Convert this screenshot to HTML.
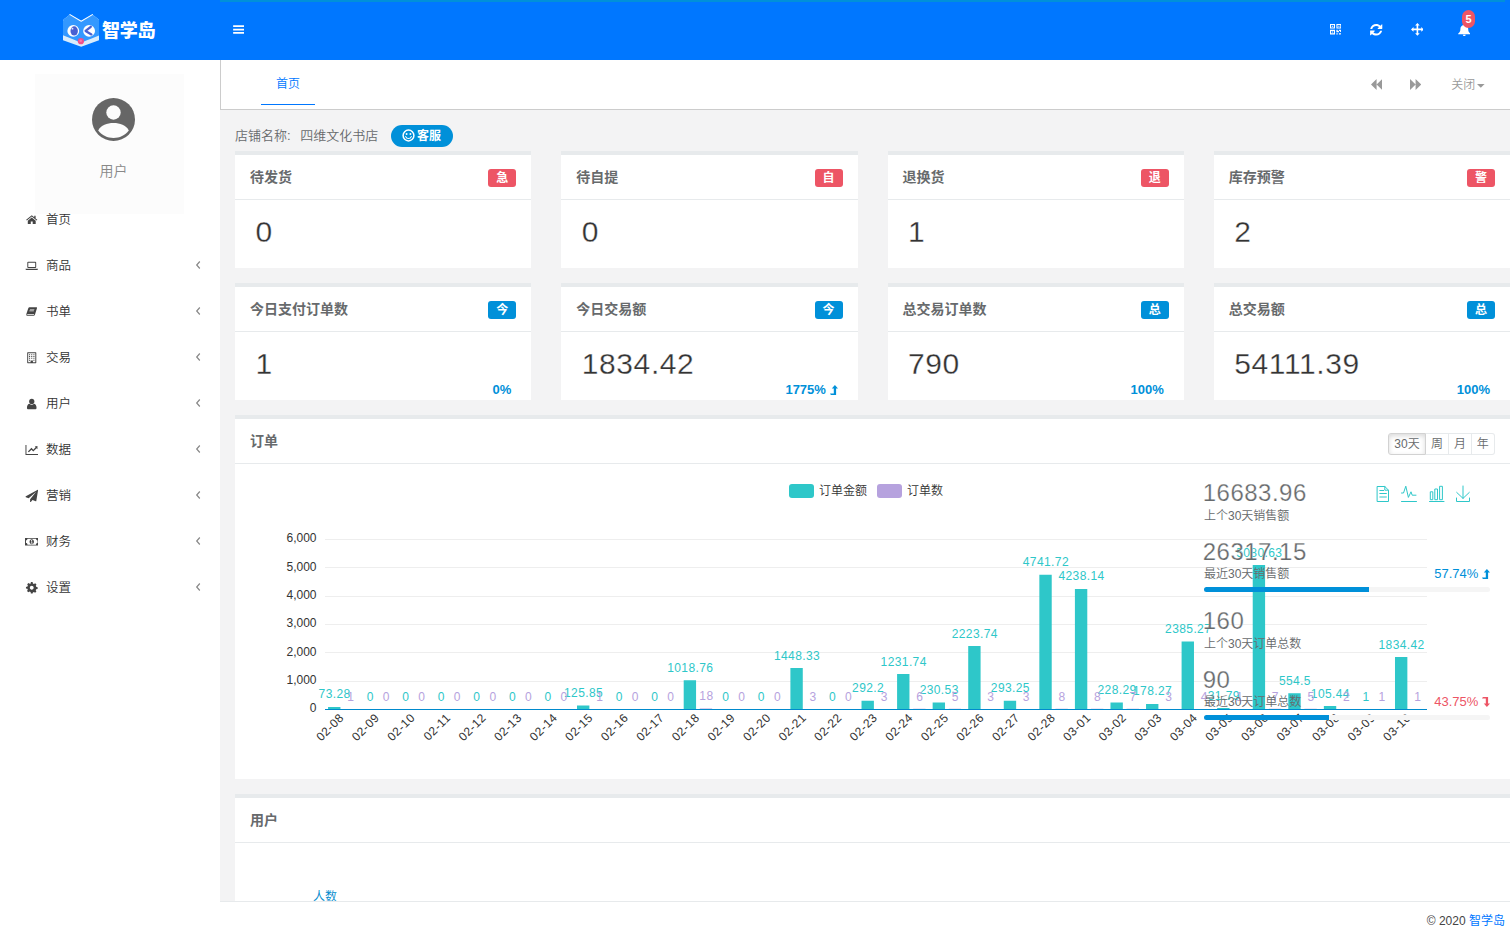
<!DOCTYPE html>
<html lang="zh-CN">
<head>
<meta charset="utf-8">
<title>智学岛</title>
<style>
*{box-sizing:border-box;margin:0;padding:0}
html,body{width:1510px;height:937px;overflow:hidden;background:#fff}
body{position:relative;font-family:"Liberation Sans","Noto Sans CJK SC",sans-serif;font-size:13px;font-weight:350;color:#676a6c}
.abs{position:absolute}
/* header */
#hdr{position:absolute;left:0;top:0;width:1510px;height:60px;background:#0077ff}
#load{position:absolute;left:220px;top:0;width:1285px;height:2px;background:#0090d9}
#brand{position:absolute;left:102px;top:16px;font-size:18px;line-height:26px;font-weight:900;color:#fff;letter-spacing:-0.2px;font-family:"Noto Sans CJK SC","Liberation Sans",sans-serif}
.hic{position:absolute;fill:#fff}
#badge5{position:absolute;left:1462px;top:10px;width:13px;height:18px;border-radius:7px;background:#ed5565;color:#fff;font-size:11px;font-weight:bold;line-height:18px;text-align:center}
/* sidebar */
#side{position:absolute;left:0;top:60px;width:220px;height:877px;background:#fff}
#ucard{position:absolute;left:35px;top:14px;width:149px;height:140px;background:#fcfcfc}
#uname{position:absolute;left:4px;width:149px;top:86.500px;text-align:center;font-size:14px;line-height:20px;color:#888}
.mi{position:absolute;left:0;width:220px;height:46px;color:#333;font-size:12.500px}
.mi span{position:absolute;left:46px;top:13px;line-height:20px}
.mi svg.ic{position:absolute;left:24.500px;top:16px;width:13.500px;height:13.500px;fill:#444}
.mi svg.ar{position:absolute;left:195px;top:16px;width:6px;height:12px;fill:none;stroke:#888;stroke-width:1.2}
/* main */
#main{position:absolute;left:220px;top:60px;width:1290px;height:841px;background:#f3f3f4;overflow:hidden}
#tabs{position:absolute;left:0;top:0;width:1290px;height:50px;background:#fff;border-left:1px solid #ccc;border-bottom:1px solid #ccc}
#tab1{position:absolute;left:40px;top:0;width:54px;height:45px;border-bottom:1px solid #0077ff;color:#0077ff;font-size:12px;line-height:18px;text-align:center;padding-top:15px}
#tabs .tr{position:absolute;top:0;color:#999;font-size:12px;line-height:18px}
#shop{position:absolute;left:15px;top:66px;font-size:13px;line-height:20px;color:#676a6c}
#kf{position:absolute;left:171px;top:65px;width:62px;height:22px;border-radius:11px;background:#0090d9;color:#fff;font-size:12px;font-weight:bold;line-height:22px}
#kf span{position:absolute;left:26px;top:0}
/* ibox */
.ibox{position:absolute;background:#fff;border-top:4px solid #e7eaec}
.ibox .tt{position:absolute;left:0;top:0;width:100%;height:45px;border-bottom:1px solid #e7eaec}
.ibox h5{position:absolute;left:15px;top:12px;font-size:14px;line-height:20px;font-weight:bold;color:#676a6c}
.lab{position:absolute;right:15px;top:14px;width:28px;height:18px;border-radius:3px;color:#fff;font-size:12px;font-weight:bold;line-height:18px;text-align:center}
.lab.r{background:#ed5565}.lab.b{background:#0090d9}
.num{position:absolute;left:20.500px;top:59px;font-size:30px;line-height:36px;color:#333;font-weight:normal;letter-spacing:.6px;-webkit-text-stroke:.3px #fff}
.pct{position:absolute;right:20px;top:93.500px;font-size:13px;line-height:18px;font-weight:bold;color:#0090d9}
/*STAT*/
#stat{position:absolute;left:0;top:-60px;width:1290px;height:900px}
#stat .h2{position:absolute;left:982.700px;font-size:24px;line-height:32px;color:#676a6c;letter-spacing:.5px;-webkit-text-stroke:.25px #fff}
#stat .sm{position:absolute;left:984px;font-size:12px;line-height:18px;color:#676a6c}
#stat .sp{position:absolute;right:20px;font-size:13px;line-height:18px}
#stat .pg{position:absolute;left:984px;width:286px;height:5px;border-radius:3px;background:#f5f5f5;overflow:hidden}
#stat .pg b{display:block;height:5px;background:#0090d9}
.bg{position:absolute;left:1153px;top:14px;height:22px;font-size:12px;line-height:20px;color:#676a6c;white-space:nowrap}
.bg span{display:inline-block;vertical-align:top;width:23px;height:22px;border:1px solid #e7eaec;border-left-width:0;text-align:center;background:#fff}
.bg span.on{border:1px solid #d2d2d2;border-radius:3px 0 0 3px;box-shadow:inset 0 2px 5px rgba(0,0,0,.15)}
.bg span:last-child{border-radius:0 3px 3px 0}
svg.lv{display:inline-block;width:8px;height:10px;vertical-align:-1px;fill:currentColor}
/*/STAT*/
/* footer */
#foot{position:absolute;left:220px;top:901px;width:1290px;height:36px;background:#fff;border-top:1px solid #e7eaec;font-size:12px;line-height:20px;color:#444}
#foot div{position:absolute;right:5px;top:9px}
#foot b{font-weight:normal;color:#0077ff}
</style>
</head>
<body>
<div id="hdr">
  <div id="load"></div>
  <!--LOGO-->
  <svg class="abs" style="left:62.8px;top:13.6px" width="36.4" height="33" viewBox="0 0 36.4 33">
<path d="M0 26.200V7.500c0-1.400.700-2.300 1.900-3.100L7 .500l11.200 6.700L29.400.500l5.100 3.900c1.200.800 1.900 1.700 1.900 3.100v18.700L18.200 32.700z" fill="#d9ecfc"/>
<path d="M0 21.300V7.500c0-1.400.700-2.300 1.900-3.100L7 .500l11.200 6.700L29.400.500l5.100 3.900c1.200.800 1.900 1.700 1.900 3.100v13.800c-4.500 2-11 4.200-18.200 7.400C11 25.500 4.500 23.300 0 21.300z" fill="#3398ff"/>
<path d="M7 .600l11.200 6.700L29.400.600" fill="none" stroke="#fff" stroke-width="1.100" stroke-linejoin="round" stroke-linecap="round" opacity=".95"/>
<circle cx="10.300" cy="16.900" r="5.900" fill="#fff"/><circle cx="26.100" cy="16.900" r="5.900" fill="#fff"/>
<ellipse cx="11.200" cy="16.900" rx="3.700" ry="4.600" fill="#4860d2"/><circle cx="9.500" cy="14.700" r=".9" fill="#dfe6ff"/>
<path d="M27.800 12.800l-5.200 4.100 5.800 3.500" fill="none" stroke="#4860d2" stroke-width="2.300" stroke-linecap="round" stroke-linejoin="round"/>
<circle cx="17.900" cy="27.200" r="3.100" fill="#f0508c"/><circle cx="17.700" cy="26.700" r="1.300" fill="#f77aa8"/>
</svg>
  <!--/LOGO-->
  <div id="brand">智学岛</div>
  <!--HICONS-->
  <svg class="hic" style="left:232.500px;top:25.200px" width="11.200" height="9" viewBox="0 0 11.500 9.500"><path d="M0 .2h11.500v1.900H0zM0 3.900h11.500v1.900H0zM0 7.400h11.500v1.900H0z"/></svg>
  <svg class="hic" style="left:1329.500px;top:24px" width="11.500" height="10.500" viewBox="0 0 11.500 10.500"><path fill-rule="evenodd" d="M0 0h5v4.600H0zM1.100 1.100v2.400h2.800V1.100zM1.900 1.800h1.200v1H1.900zM6.400 0h5v4.600h-5zM7.500 1.100v2.400h2.800V1.100zM8.300 1.800h1.200v1H8.300zM0 5.800h5v4.600H0zM1.100 6.900v2.400h2.800V6.900zM1.900 7.600h1.200v1H1.900zM6.400 5.800h1.300v1.100h1.200V5.800h2.500v2.100H10.100v-.9H8.900v1.200H6.400zM6.400 9.300h1.300v1.100H6.400zM8.900 9.300h1.200v1.100H8.900zM10.300 8.900h1.100v1.500h-1.100z"/></svg>
  <svg class="hic" style="left:1370.200px;top:24px" width="12.400" height="11.600" viewBox="0 0 12.400 11.600"><path d="M10.400 1.700l1.300-1.300c.200-.200.600-.1.600.3v3.900c0 .200-.200.400-.400.400H8c-.400 0-.500-.400-.300-.600l1.300-1.300C8.300 2.400 7.300 2 6.200 2 4.400 2 2.900 3.100 2.300 4.700c0 .100-.100.200-.300.200H.600c-.200 0-.300-.200-.300-.400C1 1.900 3.400 0 6.200 0c1.600 0 3.100.700 4.200 1.700zM2 9.900L.7 11.200c-.2.200-.6.100-.6-.3V7c0-.200.200-.400.400-.400h3.900c.400 0 .500.400.300.600L3.400 8.500c.700.700 1.700 1.100 2.800 1.100 1.800 0 3.300-1.100 3.900-2.700 0-.100.100-.200.300-.200h1.400c.200 0 .300.200.300.400-.7 2.600-3.100 4.500-5.900 4.500-1.600 0-3.100-.700-4.200-1.700z"/></svg>
  <svg class="hic" style="left:1410.600px;top:23.400px" width="12.800" height="12.800" viewBox="0 0 12.800 12.800"><path d="M6.400 0l2.300 2.500H7.200v3.100h3.100V4.100l2.500 2.300-2.500 2.300V7.200H7.200v3.100h1.500L6.400 12.800 4.100 10.300h1.500V7.200H2.500v1.500L0 6.400l2.500-2.300v1.500h3.100V2.500H4.100z"/></svg>
  <svg class="hic" style="left:1457.700px;top:24.300px" width="12.600" height="12" viewBox="0 0 12.600 12"><path d="M6.300 0c.500 0 .800.400.800.800v.3c1.900.400 3.100 2 3.100 4 0 2.500.900 3.600 2.100 4.500.300.200.200.700-.200.700H.500c-.400 0-.500-.500-.200-.700 1.200-.900 2.100-2 2.100-4.500 0-2 1.200-3.600 3.100-4V.8c0-.4.300-.8.800-.8zM4.900 10.700h2.800c0 .700-.600 1.300-1.400 1.300s-1.400-.600-1.400-1.300z"/></svg>
  <!--/HICONS-->
  <div id="badge5">5</div>
</div>
<div id="side">
  <div id="ucard">
    <svg class="abs" style="left:57px;top:24px" width="43" height="43" viewBox="0 0 43 43"><circle cx="21.5" cy="21.5" r="21.5" fill="#666"/><circle cx="21.5" cy="14.5" r="7.2" fill="#fcfcfc"/><path d="M6.2 32.5C9 27 15 25 21.5 25s12.500 2 15.300 7.500C33 37.300 27.600 40 21.500 40S10 37.300 6.200 32.500z" fill="#fcfcfc"/></svg>
    <div id="uname">用户</div>
  </div>
  <!--MENU-->
  <div class="mi" style="top:136.5px"><svg class="ic" viewBox="0 0 14 14"><path d="M7 2.3L1.2 7.1l.7.8L7 3.7l5.100 4.200.700-.800-1.800-1.500V2.900h-1.400v1.500z"/><path d="M7 4.700L2.900 8.100v3.400h3.100V8.900h2v2.600h3.100V8.100z"/></svg><span>首页</span></div>
  <div class="mi" style="top:182.5px"><svg class="ic" viewBox="0 0 14 14"><path fill-rule="evenodd" d="M3.300 2.800h7.400c.500 0 .900.400.900.900v4.800c0 .500-.400.900-.900.900H3.300c-.500 0-.900-.400-.900-.900V3.700c0-.500.400-.900.900-.900zM3.400 3.800v4.600h7.200V3.800z"/><path d="M.6 10.200h12.800v.3c0 .500-.400.800-.900.800H1.500c-.500 0-.900-.300-.900-.800z"/></svg><span>商品</span><svg class="ar" viewBox="0 0 6 12"><path d="M4.800 2.500L1.700 6l3.100 3.500"/></svg></div>
  <div class="mi" style="top:228.5px"><svg class="ic" viewBox="0 0 14 14"><path d="M4.600 2.300h7.100c.600 0 .900.500.700 1l-2.100 6.800c-.200.600-.800 1-1.400 1H2.500c-.700 0-1.300-.600-1.100-1.300.100-.200.100-.400 0-.500l2-6c.200-.600.700-1 1.200-1z M5.200 4.300l-.2.600h4.600l.2-.6z M4.700 5.800l-.2.600h4.600l.2-.6z M2.300 9.600c-.1.300 0 .600.400.600h6.100c.300 0 .500-.200.600-.400l.1-.4H2.400z" fill-rule="evenodd"/></svg><span>书单</span><svg class="ar" viewBox="0 0 6 12"><path d="M4.800 2.500L1.700 6l3.100 3.500"/></svg></div>
  <div class="mi" style="top:274.5px"><svg class="ic" viewBox="0 0 14 14"><path fill-rule="evenodd" d="M2.800 1.400h8.400c.300 0 .500.200.500.500v10.300c0 .300-.200.500-.500.500H2.800c-.300 0-.500-.200-.500-.500V1.900c0-.300.200-.500.500-.500zM3.300 2.400v9.300h2.500v-1.800h2.400v1.800h2.500V2.400z"/><path d="M4.200 3.300h1.100v1H4.200zM6.450 3.300h1.100v1h-1.100zM8.700 3.300h1.100v1H8.700zM4.200 5.200h1.100v1H4.200zM6.450 5.200h1.100v1h-1.100zM8.700 5.200h1.100v1H8.700zM4.200 7.100h1.100v1H4.200zM6.450 7.100h1.100v1h-1.100zM8.700 7.100h1.100v1H8.700zM4.200 9h1.100v1H4.200zM8.700 9h1.100v1H8.700z"/></svg><span>交易</span><svg class="ar" viewBox="0 0 6 12"><path d="M4.800 2.500L1.700 6l3.100 3.500"/></svg></div>
  <div class="mi" style="top:320.5px"><svg class="ic" viewBox="0 0 14 14"><circle cx="7" cy="4.600" r="2.700"/><path d="M2 11.300c0-2.600 1.200-4 2.700-4.200.600.600 1.400.900 2.300.900s1.700-.300 2.300-.900c1.500.200 2.700 1.600 2.700 4.200 0 .800-.700 1.300-1.500 1.300h-7c-.800 0-1.500-.500-1.500-1.300z"/></svg><span>用户</span><svg class="ar" viewBox="0 0 6 12"><path d="M4.800 2.500L1.700 6l3.100 3.500"/></svg></div>
  <div class="mi" style="top:366.5px"><svg class="ic" viewBox="0 0 14 14"><path d="M.5 2h1v9.500h12v1H.5z"/><path d="M12.900 3.200v3.200l-.9-.9-3.400 3.400-1.900-1.900-2.700 2.700-1-1 3.700-3.700 1.900 1.900 2.400-2.400-.9-.9z"/></svg><span>数据</span><svg class="ar" viewBox="0 0 6 12"><path d="M4.800 2.500L1.700 6l3.100 3.500"/></svg></div>
  <div class="mi" style="top:412.5px"><svg class="ic" viewBox="0 0 14 14"><path d="M13.300.900c.200-.100.400.100.300.300l-1.900 11.200c0 .300-.300.400-.600.300l-3.300-1.400-1.800 2.200c-.200.300-.700.100-.700-.300v-2.600l6.300-7.700-7.800 6.800L.900 8.500c-.400-.200-.400-.700 0-.900z"/></svg><span>营销</span><svg class="ar" viewBox="0 0 6 12"><path d="M4.800 2.500L1.700 6l3.100 3.500"/></svg></div>
  <div class="mi" style="top:458.5px"><svg class="ic" viewBox="0 0 14 14"><path fill-rule="evenodd" d="M.400 3h13.200c.200 0 .400.200.400.400v7.200c0 .200-.200.400-.400.400H.400c-.200 0-.400-.200-.400-.400V3.400c0-.200.200-.400.400-.400zM2.600 4c0 .900-.700 1.600-1.600 1.600v2.800c.900 0 1.600.700 1.600 1.600h8.800c0-.900.700-1.600 1.600-1.600V5.600c-.900 0-1.600-.700-1.600-1.600zM7 4.500c1.300 0 2.300 1.100 2.300 2.500S8.300 9.500 7 9.500 4.700 8.400 4.700 7 5.700 4.500 7 4.500zM6.100 8.100v.7h1.900v-.7h-.6V5.200h-.600l-.800.600.300.500.400-.300v2.100z"/></svg><span>财务</span><svg class="ar" viewBox="0 0 6 12"><path d="M4.800 2.500L1.700 6l3.100 3.500"/></svg></div>
  <div class="mi" style="top:504.5px"><svg class="ic" viewBox="0 0 14 14"><path fill-rule="evenodd" d="M6.100 1h1.800l.3 1.500c.400.100.700.300 1 .500l1.400-.6 1.300 1.300-.7 1.300c.200.300.300.700.400 1l1.500.4v1.800l-1.500.3c-.100.400-.300.700-.500 1l.7 1.400-1.300 1.300-1.300-.8c-.300.200-.700.300-1 .400L7.900 13H6.100l-.3-1.500c-.400-.100-.700-.300-1-.500l-1.400.7-1.300-1.300.8-1.300c-.200-.300-.300-.700-.400-1L1 7.900V6.100l1.500-.300c.100-.400.300-.700.500-1l-.7-1.400 1.300-1.300 1.300.8c.300-.200.700-.300 1-.400zM7 5c-1.100 0-2 .900-2 2s.900 2 2 2 2-.900 2-2-.900-2-2-2z"/></svg><span>设置</span><svg class="ar" viewBox="0 0 6 12"><path d="M4.800 2.500L1.700 6l3.100 3.500"/></svg></div>
  <!--/MENU-->
</div>
<div id="main">
  <div id="tabs">
    <div id="tab1">首页</div>
    <!--TABRIGHT-->
  <svg class="abs" style="left:1150.100px;top:19.300px;fill:#999" width="11.200" height="11" viewBox="0 0 11.200 11"><path d="M5.600 0v11L0 5.500zM11.200 0v11L5.600 5.500z"/></svg>
    <svg class="abs" style="left:1189.100px;top:19.300px;fill:#999" width="11.200" height="11" viewBox="0 0 11.200 11"><path d="M0 0l5.600 5.500L0 11zM5.600 0l5.600 5.500L5.600 11z"/></svg>
    <div class="tr" style="left:1230.300px;top:15.700px">关闭</div>
    <svg class="abs" style="left:1256.200px;top:24px;fill:#999" width="7.600" height="3.800" viewBox="0 0 8 4"><path d="M0 0h8L4 4z"/></svg>
  <!--/TABRIGHT-->
  </div>
  <div id="shop">店铺名称:<span style="margin-left:9.500px">四维文化书店</span></div>
  <div id="kf"><svg class="abs" style="left:10.800px;top:3.500px" width="13" height="13" viewBox="0 0 13 13"><circle cx="6.500" cy="6.500" r="5.400" fill="none" stroke="#fff" stroke-width="1.500"/><circle cx="4.600" cy="5" r=".95" fill="#fff"/><circle cx="8.400" cy="5" r=".95" fill="#fff"/><path d="M3.700 7.600c.500 1.200 1.500 1.900 2.800 1.900s2.300-.700 2.800-1.900" fill="none" stroke="#fff" stroke-width="1.100" stroke-linecap="round"/></svg><span>客服</span></div>
  <!--CARDS-->
  <div class="ibox" style="left:15px;top:91px;width:296.25px;height:117px"><div class="tt"><h5>待发货</h5><div class="lab r">急</div></div><div class="num">0</div></div>
  <div class="ibox" style="left:341.25px;top:91px;width:296.25px;height:117px"><div class="tt"><h5>待自提</h5><div class="lab r">自</div></div><div class="num">0</div></div>
  <div class="ibox" style="left:667.5px;top:91px;width:296.25px;height:117px"><div class="tt"><h5>退换货</h5><div class="lab r">退</div></div><div class="num">1</div></div>
  <div class="ibox" style="left:993.75px;top:91px;width:296.25px;height:117px"><div class="tt"><h5>库存预警</h5><div class="lab r">警</div></div><div class="num">2</div></div>
  <div class="ibox" style="left:15px;top:223px;width:296.25px;height:117px"><div class="tt"><h5>今日支付订单数</h5><div class="lab b">今</div></div><div class="num">1</div><div class="pct">0%</div></div>
  <div class="ibox" style="left:341.25px;top:223px;width:296.25px;height:117px"><div class="tt"><h5>今日交易额</h5><div class="lab b">今</div></div><div class="num">1834.42</div><div class="pct">1775% <svg class="lv" viewBox="0 0 8 10"><path d="M4.900 0L8 3.600H6.100V10H.900L0 8.400h3.800V3.600H1.800z"/></svg></div></div>
  <div class="ibox" style="left:667.5px;top:223px;width:296.25px;height:117px"><div class="tt"><h5>总交易订单数</h5><div class="lab b">总</div></div><div class="num">790</div><div class="pct">100%</div></div>
  <div class="ibox" style="left:993.75px;top:223px;width:296.25px;height:117px"><div class="tt"><h5>总交易额</h5><div class="lab b">总</div></div><div class="num">54111.39</div><div class="pct">100%</div></div>
  <!--/CARDS-->
  <!--ORDER-->
  <div class="ibox" style="left:15px;top:355px;width:1290px;height:364px"><div class="tt"><h5>订单</h5>
    <div class="bg"><span class="on" style="width:38px">30天</span><span>周</span><span>月</span><span style="width:22.5px">年</span></div></div></div>
  <svg class="abs" id="chart" style="left:0;top:0" width="1290" height="841" viewBox="220 60 1290 841" font-family="Liberation Sans, Noto Sans CJK SC, sans-serif" font-size="12"><path d="M324.5 539.5H1427.0M324.5 567.5H1427.0M324.5 596.5H1427.0M324.5 624.5H1427.0M324.5 652.5H1427.0M324.5 681.5H1427.0" stroke="#eee" stroke-width="1" fill="none" shape-rendering="crispEdges"/><g fill="#333" text-anchor="end"><text x="316.5" y="542.4">6,000</text><text x="316.5" y="570.7">5,000</text><text x="316.5" y="599.1">4,000</text><text x="316.5" y="627.4">3,000</text><text x="316.5" y="655.7">2,000</text><text x="316.5" y="684.1">1,000</text><text x="316.5" y="712.4">0</text></g><path d="M328.06 706.92h12.37V709.0h-12.37zM577.01 705.43h12.37V709.0h-12.37zM683.70 680.14h12.37V709.0h-12.37zM790.40 667.96h12.37V709.0h-12.37zM861.52 700.72h12.37V709.0h-12.37zM897.09 674.10h12.37V709.0h-12.37zM932.65 702.47h12.37V709.0h-12.37zM968.22 645.99h12.37V709.0h-12.37zM1003.78 700.69h12.37V709.0h-12.37zM1039.35 574.65h12.37V709.0h-12.37zM1074.91 588.92h12.37V709.0h-12.37zM1110.48 702.53h12.37V709.0h-12.37zM1146.04 703.95h12.37V709.0h-12.37zM1181.60 641.42h12.37V709.0h-12.37zM1217.17 708.10h12.37V709.0h-12.37zM1252.73 565.05h12.37V709.0h-12.37zM1288.30 693.29h12.37V709.0h-12.37zM1323.86 706.01h12.37V709.0h-12.37zM1359.43 708.97h12.37V709.0h-12.37zM1394.99 657.02h12.37V709.0h-12.37z" fill="#2ec7c9"/><path d="M344.14 708.97h12.37V709.0h-12.37zM593.09 708.97h12.37V709.0h-12.37zM699.78 708.49h12.37V709.0h-12.37zM806.48 708.91h12.37V709.0h-12.37zM877.61 708.91h12.37V709.0h-12.37zM913.17 708.83h12.37V709.0h-12.37zM948.73 708.86h12.37V709.0h-12.37zM984.30 708.91h12.37V709.0h-12.37zM1019.86 708.91h12.37V709.0h-12.37zM1055.43 708.77h12.37V709.0h-12.37zM1090.99 708.77h12.37V709.0h-12.37zM1126.56 708.80h12.37V709.0h-12.37zM1162.12 708.91h12.37V709.0h-12.37zM1197.69 708.89h12.37V709.0h-12.37zM1233.25 708.97h12.37V709.0h-12.37zM1268.82 708.80h12.37V709.0h-12.37zM1304.38 708.86h12.37V709.0h-12.37zM1339.94 708.94h12.37V709.0h-12.37zM1375.51 708.97h12.37V709.0h-12.37zM1411.07 708.97h12.37V709.0h-12.37z" fill="#b6a2de"/><path d="M324.5 709.5H1427.0" stroke="#008acd" stroke-width="1" shape-rendering="crispEdges"/><g fill="#2ec7c9" text-anchor="middle" letter-spacing="0.4"><text x="334.6" y="698.4">73.28</text><text x="370.2" y="700.5">0</text><text x="405.8" y="700.5">0</text><text x="441.3" y="700.5">0</text><text x="476.9" y="700.5">0</text><text x="512.5" y="700.5">0</text><text x="548.0" y="700.5">0</text><text x="583.6" y="696.9">125.85</text><text x="619.2" y="700.5">0</text><text x="654.7" y="700.5">0</text><text x="690.3" y="671.6">1018.76</text><text x="725.9" y="700.5">0</text><text x="761.4" y="700.5">0</text><text x="797.0" y="659.5">1448.33</text><text x="832.5" y="700.5">0</text><text x="868.1" y="692.2">292.2</text><text x="903.7" y="665.6">1231.74</text><text x="939.2" y="694.0">230.53</text><text x="974.8" y="637.5">2223.74</text><text x="1010.4" y="692.2">293.25</text><text x="1045.9" y="566.2">4741.72</text><text x="1081.5" y="580.4">4238.14</text><text x="1117.1" y="694.0">228.29</text><text x="1152.6" y="695.4">178.27</text><text x="1188.2" y="632.9">2385.27</text><text x="1223.8" y="699.6">31.79</text><text x="1259.3" y="556.5">5080.63</text><text x="1294.9" y="684.8">554.5</text><text x="1330.4" y="697.5">105.44</text><text x="1366.0" y="700.5">1</text><text x="1401.6" y="648.5">1834.42</text></g><g fill="#b6a2de" text-anchor="middle" letter-spacing="0.4"><text x="350.7" y="700.7">1</text><text x="386.3" y="700.7">0</text><text x="421.9" y="700.7">0</text><text x="457.4" y="700.7">0</text><text x="493.0" y="700.7">0</text><text x="528.5" y="700.7">0</text><text x="564.1" y="700.7">0</text><text x="599.7" y="700.7">1</text><text x="635.2" y="700.7">0</text><text x="670.8" y="700.7">0</text><text x="706.4" y="700.2">18</text><text x="741.9" y="700.7">0</text><text x="777.5" y="700.7">0</text><text x="813.1" y="700.6">3</text><text x="848.6" y="700.7">0</text><text x="884.2" y="700.6">3</text><text x="919.8" y="700.5">6</text><text x="955.3" y="700.6">5</text><text x="990.9" y="700.6">3</text><text x="1026.4" y="700.6">3</text><text x="1062.0" y="700.5">8</text><text x="1097.6" y="700.5">8</text><text x="1133.1" y="700.5">7</text><text x="1168.7" y="700.6">3</text><text x="1204.3" y="700.6">4</text><text x="1239.8" y="700.7">1</text><text x="1275.4" y="700.5">7</text><text x="1311.0" y="700.6">5</text><text x="1346.5" y="700.6">2</text><text x="1382.1" y="700.7">1</text><text x="1417.7" y="700.7">1</text></g><g fill="#333" text-anchor="end" letter-spacing="0.5"><text x="341.7" y="719.6" transform="rotate(-45 341.7 715.4)">02-08</text><text x="377.2" y="719.6" transform="rotate(-45 377.2 715.4)">02-09</text><text x="412.8" y="719.6" transform="rotate(-45 412.8 715.4)">02-10</text><text x="448.4" y="719.6" transform="rotate(-45 448.4 715.4)">02-11</text><text x="483.9" y="719.6" transform="rotate(-45 483.9 715.4)">02-12</text><text x="519.5" y="719.6" transform="rotate(-45 519.5 715.4)">02-13</text><text x="555.1" y="719.6" transform="rotate(-45 555.1 715.4)">02-14</text><text x="590.6" y="719.6" transform="rotate(-45 590.6 715.4)">02-15</text><text x="626.2" y="719.6" transform="rotate(-45 626.2 715.4)">02-16</text><text x="661.8" y="719.6" transform="rotate(-45 661.8 715.4)">02-17</text><text x="697.3" y="719.6" transform="rotate(-45 697.3 715.4)">02-18</text><text x="732.9" y="719.6" transform="rotate(-45 732.9 715.4)">02-19</text><text x="768.5" y="719.6" transform="rotate(-45 768.5 715.4)">02-20</text><text x="804.0" y="719.6" transform="rotate(-45 804.0 715.4)">02-21</text><text x="839.6" y="719.6" transform="rotate(-45 839.6 715.4)">02-22</text><text x="875.1" y="719.6" transform="rotate(-45 875.1 715.4)">02-23</text><text x="910.7" y="719.6" transform="rotate(-45 910.7 715.4)">02-24</text><text x="946.3" y="719.6" transform="rotate(-45 946.3 715.4)">02-25</text><text x="981.8" y="719.6" transform="rotate(-45 981.8 715.4)">02-26</text><text x="1017.4" y="719.6" transform="rotate(-45 1017.4 715.4)">02-27</text><text x="1053.0" y="719.6" transform="rotate(-45 1053.0 715.4)">02-28</text><text x="1088.5" y="719.6" transform="rotate(-45 1088.5 715.4)">03-01</text><text x="1124.1" y="719.6" transform="rotate(-45 1124.1 715.4)">03-02</text><text x="1159.7" y="719.6" transform="rotate(-45 1159.7 715.4)">03-03</text><text x="1195.2" y="719.6" transform="rotate(-45 1195.2 715.4)">03-04</text><text x="1230.8" y="719.6" transform="rotate(-45 1230.8 715.4)">03-05</text><text x="1266.4" y="719.6" transform="rotate(-45 1266.4 715.4)">03-06</text><text x="1301.9" y="719.6" transform="rotate(-45 1301.9 715.4)">03-07</text><text x="1337.5" y="719.6" transform="rotate(-45 1337.5 715.4)">03-08</text><text x="1373.1" y="719.6" transform="rotate(-45 1373.1 715.4)">03-09</text><text x="1408.6" y="719.6" transform="rotate(-45 1408.6 715.4)">03-10</text></g><rect x="789" y="484" width="25" height="14" rx="3" fill="#2ec7c9"/><text x="819" y="494.700" fill="#333">订单金额</text><rect x="877" y="484" width="25" height="14" rx="3" fill="#b6a2de"/><text x="907" y="494.700" fill="#333">订单数</text><g fill="none" stroke="#2ec7c9" stroke-width="1" stroke-linejoin="round" stroke-linecap="round"><path d="M1377.500 486.500h7.300l3.700 3.700v11.300h-11zM1384.800 486.500v3.700h3.700M1379.800 490.500h3.800M1379.800 493.500h6.600M1379.800 497h6.600"/><path d="M1401.500 493h2l2.300-6.800 2.600 11.200 2.600-5.600 1.200 3.400h3.800M1401.500 501.500h15"/><path d="M1430.300 499.300v-7.500h2.500v7.500zM1434.800 499.300v-10.300h2.700v10.300zM1439.600 499.300v-13h2.800v13zM1429.500 501.500h14.500"/><path d="M1463 486v12.300M1456.700 492.400l6.300 6 6.300-6M1456.500 498v3.500h13v-3.500"/></g></svg>
  <div id="stat">
    <div class="h2" style="top:477px">16683.96</div><div class="sm" style="top:506.500px">上个30天销售额</div>
    <div class="h2" style="top:535.500px">26317.15</div><div class="sm" style="top:565px">最近30天销售额</div><div class="sp" style="top:565px;color:#0090d9">57.74% <svg class="lv" viewBox="0 0 8 10"><path d="M4.900 0L8 3.600H6.100V10H.900L0 8.400h3.800V3.600H1.800z"/></svg></div>
    <div class="pg" style="top:587px"><b style="width:165px"></b></div>
    <div class="h2" style="top:605px">160</div><div class="sm" style="top:634.500px">上个30天订单总数</div>
    <div class="h2" style="top:664px">90</div><div class="sm" style="top:693px">最近30天订单总数</div><div class="sp" style="top:693px;color:#ed5565">43.75% <svg class="lv" viewBox="0 0 8 10"><path d="M0 1.600L.900 0h5.200v6.400H8L4.900 10 1.800 6.400h2V1.600z"/></svg></div>
    <div class="pg" style="top:715px"><b style="width:125px"></b></div>
  </div>
  <!--/ORDER-->
  <!--USER-->
  <div class="ibox" style="left:15px;top:734px;width:1290px;height:200px"><div class="tt"><h5>用户</h5></div></div>
  <div class="abs" style="left:93px;top:827.500px;font-size:12px;line-height:18px;color:#008acd">人数</div>
  <!--/USER-->
</div>
<div id="foot"><div>© 2020 <b>智学岛</b></div></div>
</body>
</html>
